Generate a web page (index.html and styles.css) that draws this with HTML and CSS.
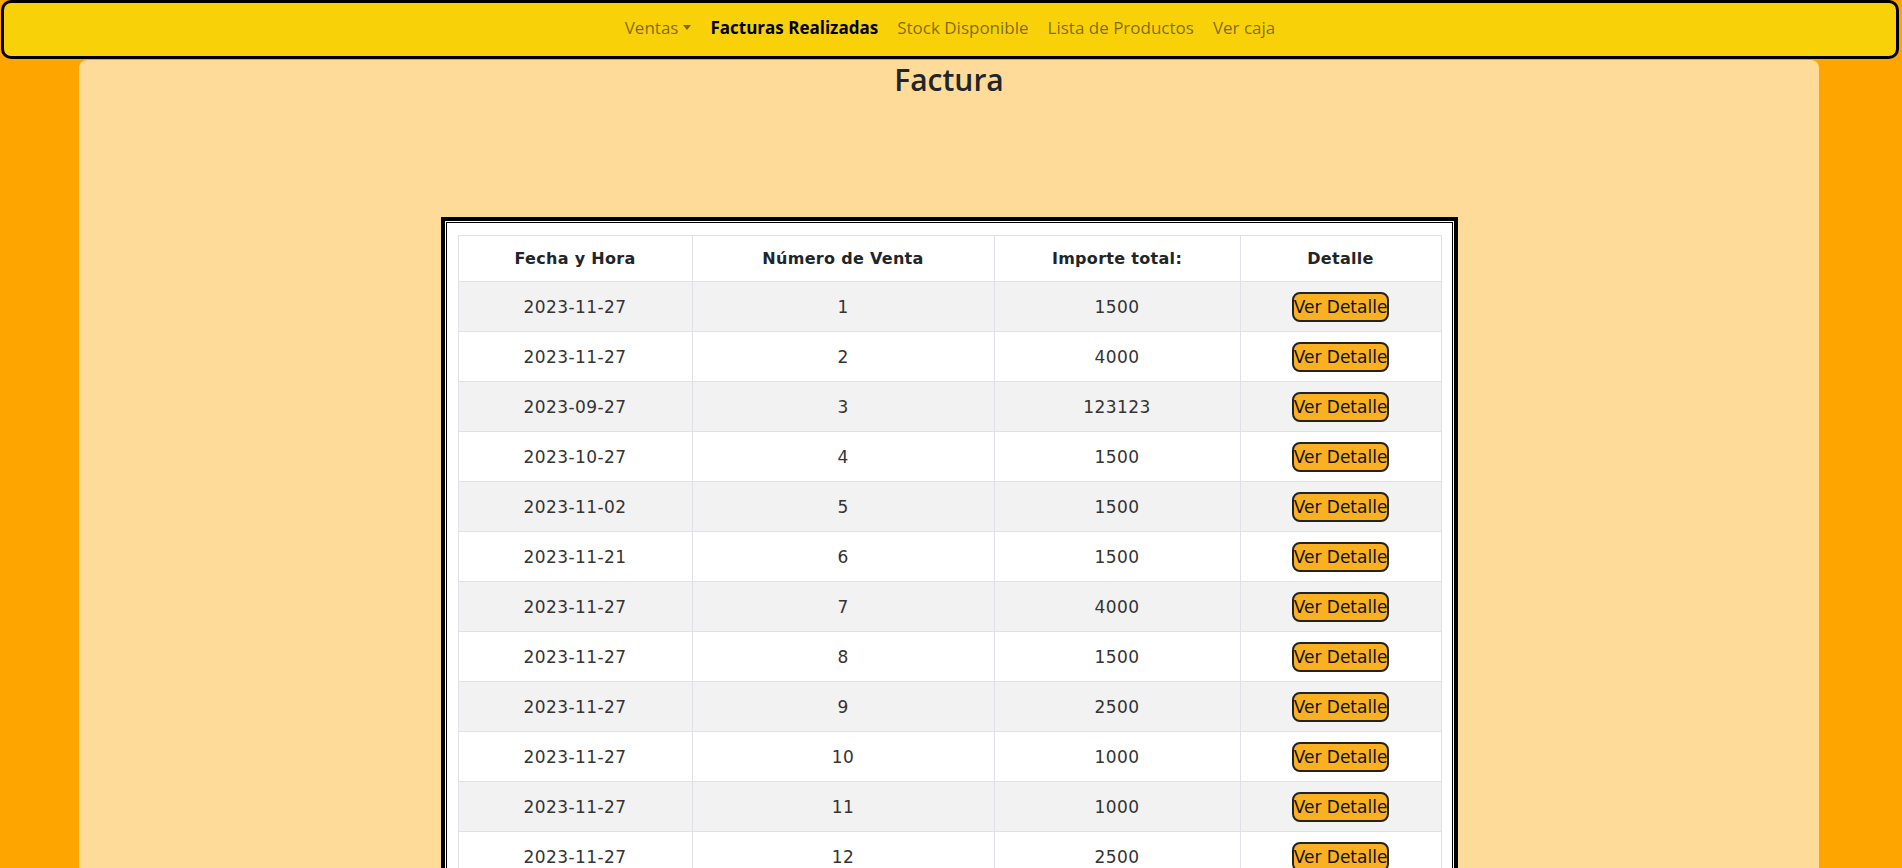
FILE: index.html
```html
<!DOCTYPE html>
<html lang="es">
<head>
<meta charset="utf-8">
<title>Facturas Realizadas</title>
<link rel="stylesheet" href="styles.css">
</head>
<body>
<nav class="navbar">
  <ul class="nav">
    <li><a class="nav-link dropdown-toggle" href="#">Ventas</a></li>
    <li><a class="nav-link active" href="#">Facturas Realizadas</a></li>
    <li><a class="nav-link" href="#">Stock Disponible</a></li>
    <li><a class="nav-link" href="#">Lista de Productos</a></li>
    <li><a class="nav-link" href="#">Ver caja</a></li>
  </ul>
</nav>
<main class="card">
  <h2 class="title">Factura</h2>
  <div class="frame">
    <div class="frame-inner">
      <table class="ventas">
        <colgroup>
          <col class="c1"><col class="c2"><col class="c3"><col class="c4">
        </colgroup>
        <thead>
          <tr><th>Fecha y Hora</th><th>Número de Venta</th><th>Importe total:</th><th>Detalle</th></tr>
        </thead>
        <tbody>
          <tr><td>2023-11-27</td><td>1</td><td>1500</td><td><button class="btn">Ver Detalle</button></td></tr>
          <tr><td>2023-11-27</td><td>2</td><td>4000</td><td><button class="btn">Ver Detalle</button></td></tr>
          <tr><td>2023-09-27</td><td>3</td><td>123123</td><td><button class="btn">Ver Detalle</button></td></tr>
          <tr><td>2023-10-27</td><td>4</td><td>1500</td><td><button class="btn">Ver Detalle</button></td></tr>
          <tr><td>2023-11-02</td><td>5</td><td>1500</td><td><button class="btn">Ver Detalle</button></td></tr>
          <tr><td>2023-11-21</td><td>6</td><td>1500</td><td><button class="btn">Ver Detalle</button></td></tr>
          <tr><td>2023-11-27</td><td>7</td><td>4000</td><td><button class="btn">Ver Detalle</button></td></tr>
          <tr><td>2023-11-27</td><td>8</td><td>1500</td><td><button class="btn">Ver Detalle</button></td></tr>
          <tr><td>2023-11-27</td><td>9</td><td>2500</td><td><button class="btn">Ver Detalle</button></td></tr>
          <tr><td>2023-11-27</td><td>10</td><td>1000</td><td><button class="btn">Ver Detalle</button></td></tr>
          <tr><td>2023-11-27</td><td>11</td><td>1000</td><td><button class="btn">Ver Detalle</button></td></tr>
          <tr><td>2023-11-27</td><td>12</td><td>2500</td><td><button class="btn">Ver Detalle</button></td></tr>
          <tr><td>2023-11-27</td><td>13</td><td>1500</td><td><button class="btn">Ver Detalle</button></td></tr>
        </tbody>
      </table>
    </div>
  </div>
</main>
</body>
</html>
```

FILE: styles.css
```css
html {
  overflow: hidden;
}

body {
  margin: 0;
  background: #ffa500;
  font-family: "Open Sans", "Liberation Sans", sans-serif;
  color: #212529;
}

.navbar {
  box-sizing: border-box;
  height: 59px;
  margin: 0 3px 0 1px;
  border: 3px solid #000;
  border-radius: 10px;
  background: #f9d108;
  display: flex;
  justify-content: center;
  align-items: center;
  padding-bottom: 4px;
}

.nav {
  list-style: none;
  margin: 0;
  padding: 0;
  display: flex;
  align-items: center;
}

.nav-link {
  display: block;
  padding: 0 9.5px;
  font-size: 17px;
  line-height: 24px;
  color: rgba(0, 0, 0, 0.5);
  text-decoration: none;
}

.nav-link.active {
  color: #000;
  font-weight: 700;
}

.dropdown-toggle::after {
  content: "";
  display: inline-block;
  margin-left: 5px;
  vertical-align: 4px;
  border-top: 5px solid;
  border-left: 4.5px solid transparent;
  border-right: 4.5px solid transparent;
}

.card {
  display: block;
  margin: 1px 83px 0 79px;
  min-height: 900px;
  background: #fedb99;
  border-radius: 8px;
  padding-top: 2px;
}

.title {
  margin: 0;
  text-align: center;
  font-size: 30px;
  font-weight: 600;
  line-height: 36px;
  color: #212529;
}

.frame {
  width: 1017px;
  box-sizing: border-box;
  margin: 119px auto 0;
  border: 4px solid #000;
  padding: 1px;
  background: #fff;
}

.frame-inner {
  border: 1px solid #000;
  padding: 12px 10px 12px 11px;
}

.ventas {
  width: 983px;
  border-collapse: collapse;
  table-layout: fixed;
  background: #fff;
}

.c1 { width: 234px; }
.c2 { width: 302px; }
.c3 { width: 246px; }
.c4 { width: 201px; }

.ventas th,
.ventas td {
  border: 1px solid #dee2e6;
  text-align: center;
  vertical-align: middle;
}

.ventas th {
  padding: 10px 8px;
  line-height: 25px;
  font-family: "DejaVu Sans", sans-serif;
  font-size: 16px;
  font-weight: 700;
  letter-spacing: 0.3px;
  color: #212529;
}

.ventas td {
  padding: 10px 8px 9px;
  font-family: "DejaVu Sans", sans-serif;
  font-size: 17px;
  line-height: 24px;
  letter-spacing: 0.4px;
  color: #333;
}

.ventas tbody tr:nth-child(odd) td {
  background: #f2f2f2;
}

.btn {
  display: inline-block;
  height: 30px;
  box-sizing: border-box;
  padding: 0;
  margin: 0;
  border: 2px solid #222;
  border-radius: 8px;
  background: #f9b122;
  font-family: "DejaVu Sans", sans-serif;
  font-size: 17px;
  line-height: 24px;
  letter-spacing: 0;
  color: #111;
  vertical-align: middle;
}
```
